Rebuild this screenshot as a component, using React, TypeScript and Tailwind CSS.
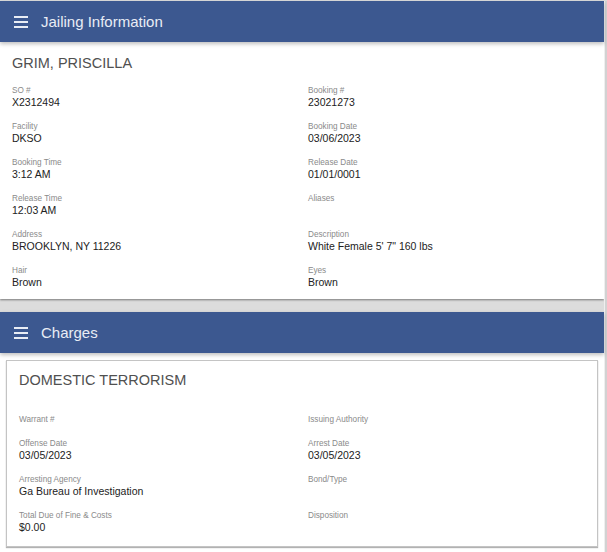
import React from "react";

const font = { fontFamily: '"Liberation Sans", Arial, Helvetica, sans-serif' };

function Burger() {
  return (
    <svg width="14" height="12" viewBox="0 0 14 12" className="shrink-0">
      <rect x="0" y="0" width="14" height="2" fill="#e9edf5" />
      <rect x="0" y="5" width="14" height="2" fill="#e9edf5" />
      <rect x="0" y="10" width="14" height="2" fill="#e9edf5" />
    </svg>
  );
}

function Header({ title }: { title: string }) {
  return (
    <div className="relative z-10 flex h-[41px] items-center gap-[13px] bg-[#3c5890] pl-[14px] shadow-[0_2px_4px_rgba(0,0,0,0.25)]">
      <Burger />
      <span className="pt-px text-[15px] leading-[18px] text-[#e9edf5]">{title}</span>
    </div>
  );
}

function Field({ label, value }: { label: string; value?: string }) {
  return (
    <div>
      <div className="text-[8.2px] leading-[10px] text-[#8a8a8a]">{label}</div>
      {value ? <div className="text-[10.5px] leading-[12px] text-[#222]">{value}</div> : null}
    </div>
  );
}

const jail: [string, string][] = [
  ["SO #", "X2312494"],
  ["Booking #", "23021273"],
  ["Facility", "DKSO"],
  ["Booking Date", "03/06/2023"],
  ["Booking Time", "3:12 AM"],
  ["Release Date", "01/01/0001"],
  ["Release Time", "12:03 AM"],
  ["Aliases", ""],
  ["Address", "BROOKLYN, NY 11226"],
  ["Description", "White Female 5' 7\" 160 lbs"],
  ["Hair", "Brown"],
  ["Eyes", "Brown"],
];

const charges: [string, string][] = [
  ["Warrant #", ""],
  ["Issuing Authority", ""],
  ["Offense Date", "03/05/2023"],
  ["Arrest Date", "03/05/2023"],
  ["Arresting Agency", "Ga Bureau of Investigation"],
  ["Bond/Type", ""],
  ["Total Due of Fine & Costs", "$0.00"],
  ["Disposition", ""],
];

export default function App() {
  return (
    <div style={font} className="flex h-[552px] w-[607px] overflow-hidden bg-[#dcdcdc] pt-px">
      <div className="flex w-[604px] shrink-0 flex-col">
        <Header title="Jailing Information" />
        <div className="bg-white px-3 pb-[11px] pt-[12px] shadow-[0_1px_2px_rgba(0,0,0,0.45)]">
          <div className="text-[14.5px] leading-[18px] text-[#505050]">GRIM, PRISCILLA</div>
          <div className="mt-[14px] grid grid-cols-2 gap-x-3 gap-y-[14px]">
            {jail.map(([l, v]) => (
              <Field key={l} label={l} value={v} />
            ))}
          </div>
        </div>
        <div className="h-[13px]" />
        <Header title="Charges" />
        <div className="flex-1 bg-white px-[6px] pt-[7px]">
          <div className="border border-[#c4c4c4] bg-white px-3 pb-[13px] pt-[10px] shadow-[0_1px_1px_rgba(0,0,0,0.3)]">
            <div className="text-[14.5px] leading-[18px] text-[#505050]">DOMESTIC TERRORISM</div>
            <div className="mt-[26px] grid grid-cols-2 gap-x-3 gap-y-[14px]">
              {charges.map(([l, v]) => (
                <Field key={l} label={l} value={v} />
              ))}
            </div>
          </div>
        </div>
      </div>
      <div className="flex h-full shrink-0">
        <div className="w-px bg-[#efefef]" />
        <div className="w-[2px] bg-[#d2d2d2]" />
      </div>
    </div>
  );
}
